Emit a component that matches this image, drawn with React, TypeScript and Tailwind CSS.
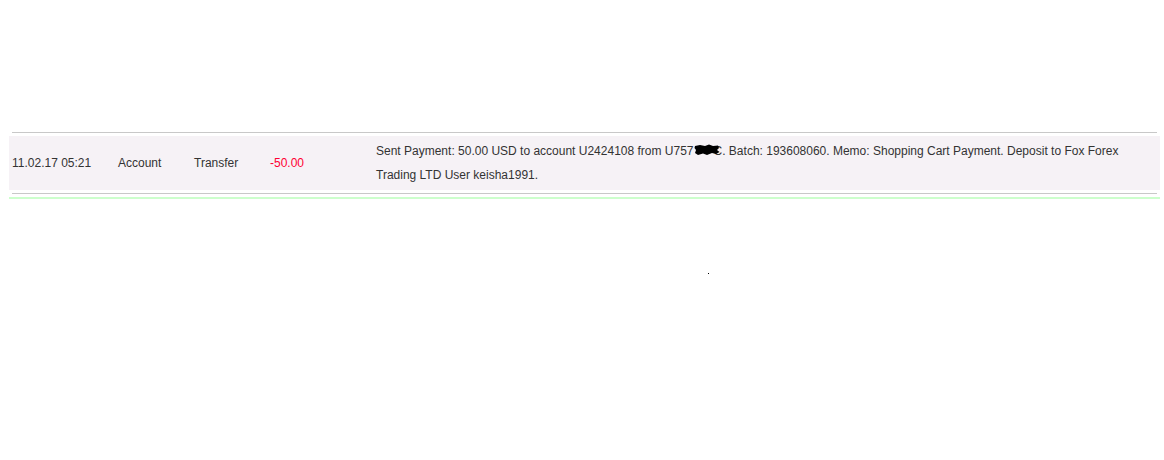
import React from "react";

export default function App() {
  return (
    <div className="relative w-[1164px] h-[460px] bg-white text-[12px] text-[#333333]" style={{ fontFamily: '"Liberation Sans", Arial, sans-serif' }}>
      <div className="pt-[132px] pl-[9px] w-[1160px]">
        <div className="mx-[3px] h-px bg-[#c8c8c8]" />
        <div className="mt-[3px] h-[54px] bg-[#f6f2f6] flex items-center">
          <div className="w-[109px] pl-[3px] shrink-0">11.02.17 05:21</div>
          <div className="w-[76px] shrink-0">Account</div>
          <div className="w-[76px] shrink-0">Transfer</div>
          <div className="w-[106px] shrink-0 text-[#ff0033]">-50.00</div>
          <div className="flex-1 leading-[24px] pr-[30px]">
            Sent Payment: 50.00 USD to account U2424108 from U757
            <span className="relative inline-block w-[20px] h-[10px] align-baseline">
              <svg className="absolute left-0 top-[-1px] z-10" width="26" height="12" viewBox="0 0 26 12">
                <path d="M1 2 L6 1 L11 2 L15 0.5 L19 2 L24 1.5 L25 4 L23 6 L25.5 8 L22 10 L18 9 L13 11 L9 9.5 L4 11 L1 9 L2 6 L0.5 4 Z" fill="#000" />
              </svg>
            </span>
            C. Batch: 193608060. Memo: Shopping Cart Payment. Deposit to Fox Forex Trading LTD User keisha1991.
          </div>
        </div>
        <div className="mt-[3px] mx-[3px] h-px bg-[#c8c8c8]" />
        <div className="mt-[3px] h-[2px] bg-[#ccffcc]" />
      </div>
      <div className="absolute left-[708px] top-[273px] w-px h-px bg-black" />
    </div>
  );
}
